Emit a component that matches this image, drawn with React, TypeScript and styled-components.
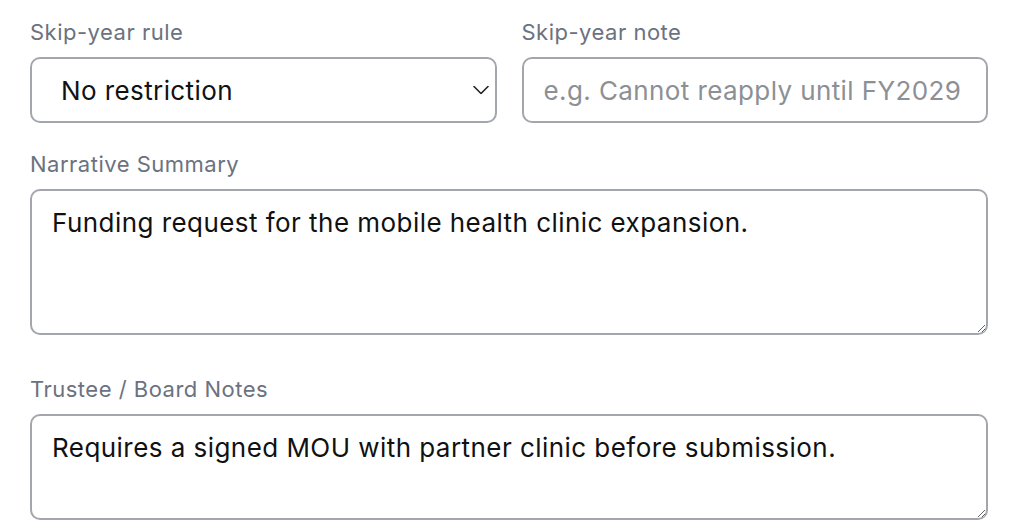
import React from 'react';
import styled, { createGlobalStyle } from 'styled-components';

const GlobalStyle = createGlobalStyle`
  html, body {
    margin: 0;
    padding: 0;
    background: #ffffff;
  }
  body {
    font-family: Inter, 'Liberation Sans', sans-serif;
    overflow: hidden;
  }
  * {
    box-sizing: border-box;
  }
`;

const Form = styled.div`
  width: 1016px;
  padding: 17px 28px 0 30px;
  display: flex;
  flex-direction: column;
`;

const Row = styled.div`
  display: grid;
  grid-template-columns: 1fr 1fr;
  column-gap: 25px;
  margin-bottom: 26px;
`;

const Field = styled.div<{ $space?: number }>`
  display: flex;
  flex-direction: column;
  margin-bottom: ${({ $space }) => $space ?? 0}px;
`;

const Label = styled.label`
  font-size: 22px;
  letter-spacing: 0.5px;
  line-height: 30px;
  color: #6b7280;
  margin-bottom: 10px;
`;

const SelectWrap = styled.div`
  position: relative;
`;

const Select = styled.select`
  appearance: none;
  width: 100%;
  height: 66px;
  padding: 0 50px 0 29px;
  border: 2px solid #a3a7ad;
  border-radius: 10px;
  background: #fff;
  font-family: inherit;
  font-size: 26px;
  letter-spacing: 0.4px;
  color: #111;
  outline: none;
`;

const Chevron = styled.svg`
  position: absolute;
  right: 8px;
  top: 50%;
  transform: translateY(-50%);
  pointer-events: none;
`;

const Input = styled.input`
  width: 100%;
  height: 66px;
  padding: 0 20px;
  border: 2px solid #a3a7ad;
  border-radius: 10px;
  font-family: inherit;
  font-size: 26px;
  letter-spacing: 0.4px;
  color: #111;
  outline: none;

  &::placeholder {
    color: #8c9096;
  }
`;

const TextArea = styled.textarea<{ $height: number }>`
  display: block;
  width: 100%;
  height: ${({ $height }) => $height}px;
  padding: 12px 20px;
  border: 2px solid #a3a7ad;
  border-radius: 10px;
  font-family: inherit;
  font-size: 26px;
  letter-spacing: 0.45px;
  line-height: 40px;
  color: #111;
  outline: none;
`;

export default function App() {
  return (
    <>
      <GlobalStyle />
      <Form>
        <Row>
          <Field>
            <Label>Skip-year rule</Label>
            <SelectWrap>
              <Select defaultValue="none">
                <option value="none">No restriction</option>
                <option value="one">Skip one year</option>
                <option value="two">Skip two years</option>
              </Select>
              <Chevron width="16" height="9" viewBox="0 0 16 9" fill="none">
                <path d="M1 1l7 7 7-7" stroke="#222" strokeWidth="1.6" strokeLinecap="round" strokeLinejoin="round" />
              </Chevron>
            </SelectWrap>
          </Field>
          <Field>
            <Label>Skip-year note</Label>
            <Input placeholder="e.g. Cannot reapply until FY2029" />
          </Field>
        </Row>
        <Field $space={39}>
          <Label>Narrative Summary</Label>
          <TextArea $height={146} defaultValue="Funding request for the mobile health clinic expansion." />
        </Field>
        <Field>
          <Label>Trustee / Board Notes</Label>
          <TextArea $height={106} defaultValue="Requires a signed MOU with partner clinic before submission." />
        </Field>
      </Form>
    </>
  );
}
